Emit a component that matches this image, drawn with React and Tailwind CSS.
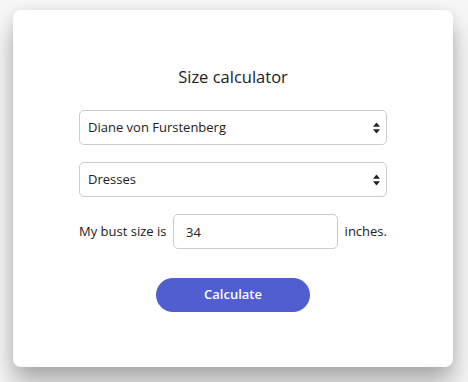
import { useState } from "react";

// ─── Select arrow ─────────────────────────────────────────────────────────────
function Arrows() {
  return (
    <svg
      width="7"
      height="11"
      viewBox="0 0 7 11"
      className="pointer-events-none absolute right-[7px] top-1/2 -translate-y-1/2"
    >
      <path d="M3.5 0 L7 4.3 L0 4.3 Z" fill="#222" />
      <path d="M3.5 11 L7 6.7 L0 6.7 Z" fill="#222" />
    </svg>
  );
}

function Select({ value, options, onChange }) {
  return (
    <div className="relative w-full">
      <select
        value={value}
        onChange={(e) => onChange(e.target.value)}
        className="h-[35px] w-full appearance-none rounded-[5px] border border-[#cccccc] bg-white pl-[8px] pr-6 text-[13px] text-[#222] outline-none"
      >
        {options.map((o) => (
          <option key={o}>{o}</option>
        ))}
      </select>
      <Arrows />
    </div>
  );
}

// ─── App ──────────────────────────────────────────────────────────────────────
export default function App() {
  const [brand, setBrand] = useState("Diane von Furstenberg");
  const [category, setCategory] = useState("Dresses");
  const [bust, setBust] = useState("34");

  return (
    <div
      className="min-h-screen bg-[#f6f6f6] pl-[13px] pt-[10px]"
      style={{ fontFamily: '"Open Sans", sans-serif' }}
    >
      <div className="flex h-[357px] w-[440px] flex-col items-center rounded-[8px] bg-white px-[66px] pt-[55px] shadow-[0_16px_24px_rgba(0,0,0,0.3),0_0_12px_rgba(0,0,0,0.06)]">
        <h1 className="text-[16.5px] leading-6 text-[#222]">Size calculator</h1>

        <div className="mt-[21px] flex w-full flex-col gap-[17px]">
          <Select
            value={brand}
            onChange={setBrand}
            options={["Diane von Furstenberg", "Ganni", "Reformation"]}
          />
          <Select
            value={category}
            onChange={setCategory}
            options={["Dresses", "Tops", "Trousers"]}
          />
        </div>

        <div className="mt-[17px] flex w-full items-center justify-between whitespace-nowrap text-[13px] text-[#222]">
          <span>My bust size is</span>
          <input
            value={bust}
            onChange={(e) => setBust(e.target.value)}
            className="h-[35px] w-[165px] rounded-[5px] border border-[#cccccc] bg-white px-[12px] text-[13px] text-[#222] outline-none"
          />
          <span>inches.</span>
        </div>

        <button
          type="button"
          className="mt-[29px] h-[34px] w-[154px] rounded-full bg-[#505ecf] text-[13px] font-semibold text-white"
        >
          Calculate
        </button>
      </div>
    </div>
  );
}
